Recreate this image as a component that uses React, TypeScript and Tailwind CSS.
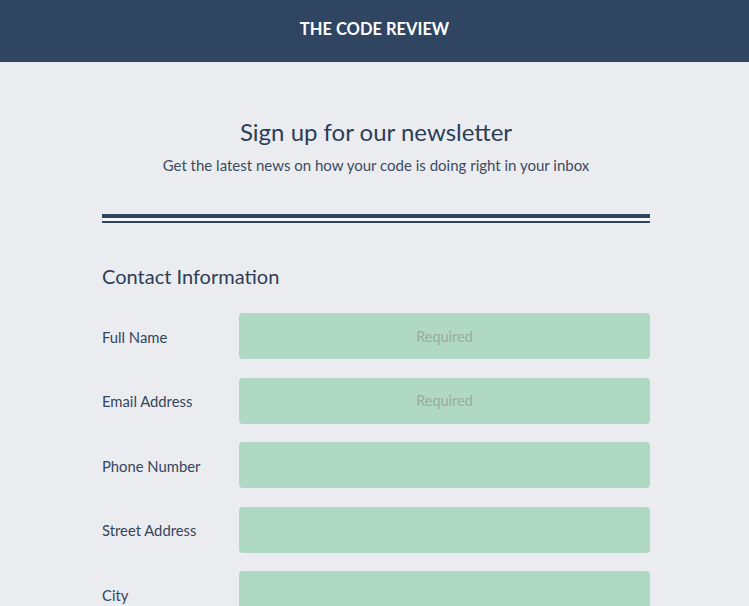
const fields = [
  { label: 'Full Name', placeholder: 'Required' },
  { label: 'Email Address', placeholder: 'Required' },
  { label: 'Phone Number', placeholder: '' },
  { label: 'Street Address', placeholder: '' },
  { label: 'City', placeholder: '' },
  { label: 'State', placeholder: '' },
];

export default function App() {
  return (
    <div className="min-h-screen bg-[#ebecf0] text-[#2c3e58]" style={{ fontFamily: 'Lato, "Noto Sans", sans-serif' }}>
      <header className="h-[62px] bg-[#2f4562] flex items-center justify-center pb-[3px]">
        <h1 className="text-white text-[16.5px] font-bold">THE CODE REVIEW</h1>
      </header>

      <main className="ml-[102px] w-[548px] pb-10">
        <div className="pt-[55px] text-center">
          <h2 className="text-[24px] leading-[30px]">Sign up for our newsletter</h2>
          <p className="mt-[8px] text-[15px] leading-[20px] text-[#3c4b60]">
            Get the latest news on how your code is doing right in your inbox
          </p>
        </div>

        <div className="mt-[39px] border-t-4 border-b-2 border-[#2f4562] h-[9px] bg-white/60" />

        <h3 className="mt-[40px] text-[20px] leading-[26px]">Contact Information</h3>

        <form className="mt-[24px] flex flex-col gap-[18.5px]">
          {fields.map((f) => (
            <div key={f.label} className="flex items-center">
              <label className="w-[137px] text-[14.8px] pt-[2px] text-[#34455c]">{f.label}</label>
              <input
                type="text"
                placeholder={f.placeholder}
                className="flex-1 h-[46px] rounded-[4px] bg-[#b0d9c3] text-center text-[14.5px] placeholder:text-[#9aaba2] outline-none"
              />
            </div>
          ))}
        </form>
      </main>
    </div>
  );
}
